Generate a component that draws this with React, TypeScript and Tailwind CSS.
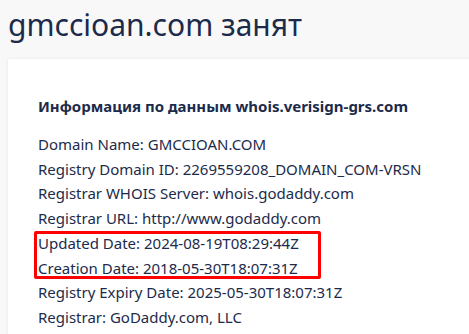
import React from "react";

const lines1 = [
  "Domain Name: GMCCIOAN.COM",
  "Registry Domain ID: 2269559208_DOMAIN_COM-VRSN",
  "Registrar WHOIS Server: whois.godaddy.com",
  "Registrar URL: http://www.godaddy.com",
];
const boxed = ["Updated Date: 2024-08-19T08:29:44Z", "Creation Date: 2018-05-30T18:07:31Z"];
const lines2 = ["Registry Expiry Date: 2025-05-30T18:07:31Z", "Registrar: GoDaddy.com, LLC"];

export default function App() {
  return (
    <div
      className="w-[469px] h-[334px] overflow-hidden bg-[#f8f8f8] text-[#1c2b4b]"
      style={{ fontFamily: '"Noto Sans", "Open Sans", sans-serif' }}
    >
      <h1 className="pl-[8px] pt-[4px] text-[30px] leading-[42px] font-normal">gmccioan.com занят</h1>
      <div className="ml-[8px] mt-[13px] w-[480px] bg-white shadow-[0_0_3px_rgba(0,0,0,0.08)] pl-[30px] pt-[35px] pb-[20px]">
        <h2 className="text-[15px] font-bold leading-[24px] mb-[14px]">Информация по данным whois.verisign-grs.com</h2>
        <div className="text-[15px] leading-[24.7px]">
          {lines1.map((l) => (
            <div key={l}>{l}</div>
          ))}
          <div className="relative">
            {boxed.map((l) => (
              <div key={l}>{l}</div>
            ))}
            <span className="absolute left-[-4px] top-[0px] w-[287px] h-[48px] border-[3px] border-[#ff0000] rounded-[2px]" />
          </div>
          {lines2.map((l) => (
            <div key={l}>{l}</div>
          ))}
        </div>
      </div>
    </div>
  );
}
